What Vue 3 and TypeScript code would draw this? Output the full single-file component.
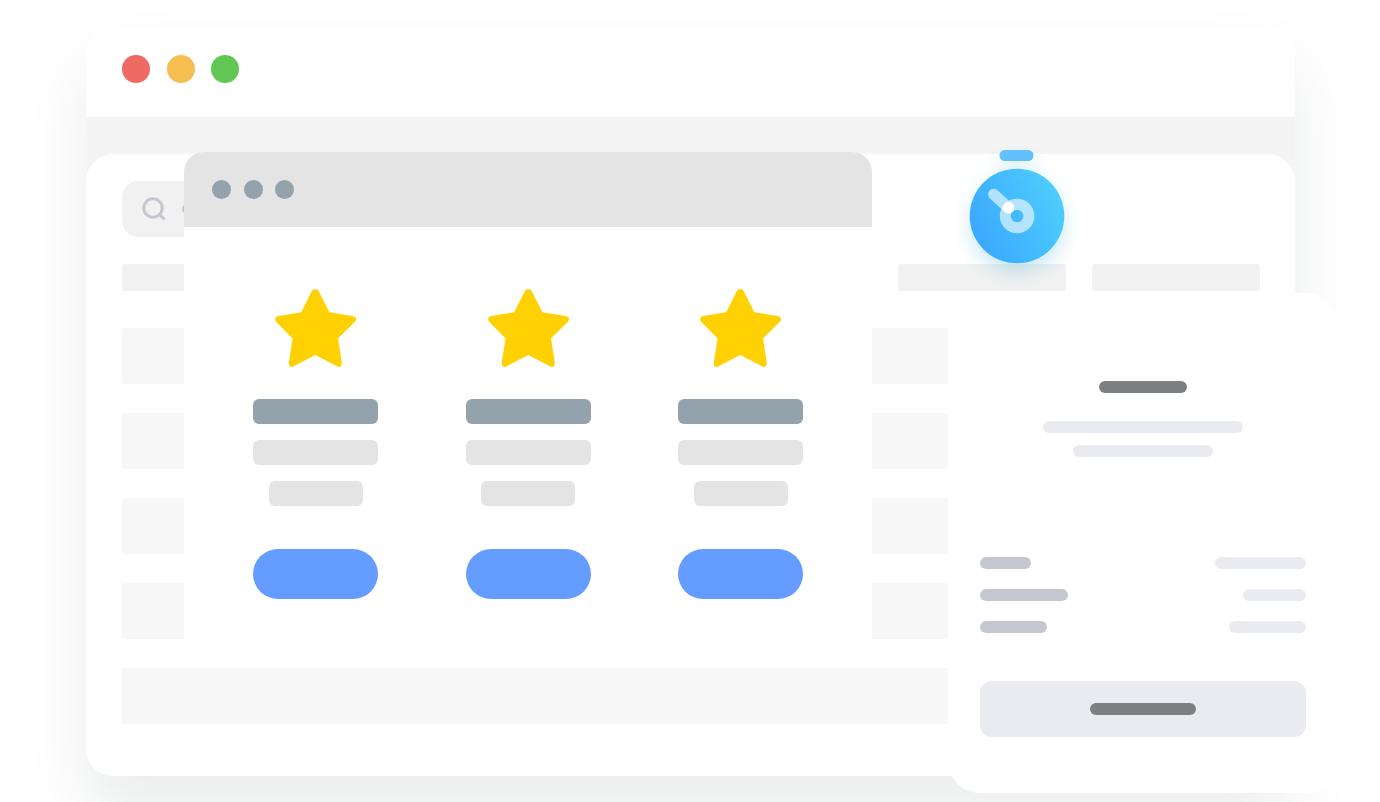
<script setup lang="ts">
interface DetailRow {
  label: number
  value: number
}

const lights: { name: string; tone: string }[] = [
  { name: 'Close', tone: 'red' },
  { name: 'Minimize', tone: 'amber' },
  { name: 'Zoom', tone: 'green' },
]
const plans: string[] = ['first', 'second', 'third']
const details: DetailRow[] = [
  { label: 51, value: 91 },
  { label: 88, value: 63 },
  { label: 67, value: 77 },
]
</script>

<template>
  <main class="stage">
    <section class="browser">
      <header class="titlebar">
        <div class="lights">
          <button
            v-for="light in lights"
            :key="light.tone"
            type="button"
            class="light"
            :class="light.tone"
            :aria-label="light.name"
          ></button>
        </div>
      </header>
      <div class="backdrop">
        <div class="page">
          <label class="search">
            <svg class="search-icon" viewBox="0 0 24 24" aria-hidden="true">
              <circle cx="11" cy="11" r="9.2" />
              <path d="M17.8 17.8 22.6 22.4" />
            </svg>
            <span class="search-hint"></span>
            <input class="search-input" type="search" aria-label="Search" />
          </label>
          <div class="chips">
            <span v-for="n in 6" :key="n" class="chip"></span>
          </div>
          <div class="rows">
            <div v-for="n in 5" :key="n" class="row"></div>
          </div>
        </div>
      </div>
    </section>

    <section class="popup">
      <header class="popup-bar">
        <div class="popup-dots">
          <span v-for="n in 3" :key="n" class="popup-dot"></span>
        </div>
      </header>
      <div class="plans">
        <article v-for="plan in plans" :key="plan" class="plan">
          <svg class="star" viewBox="0 0 81 78" aria-hidden="true">
            <path
              d="M36.7 2.2Q37.8 .3 39.2 .3H41.4Q42.8 .3 43.8 2.2L54.4 23.3 77.6 26.9Q83.2 28.6 80.1 32.6L63 49.5 66.8 73.6Q66.8 79.2 62.4 77.5L40.3 66 18.2 77.5Q13.8 79.2 13.8 73.6L17.6 49.5 .9 32.6Q-1.6 28.6 3 26.9L26.2 23.3Z"
            />
          </svg>
          <div class="block dark"></div>
          <div class="block"></div>
          <div class="block short"></div>
          <button type="button" class="choose" :aria-label="`Choose ${plan} plan`"></button>
        </article>
      </div>
    </section>

    <svg class="timer" viewBox="0 0 96 115" aria-hidden="true">
      <defs>
        <linearGradient id="timer-face" x1="0.05" y1="0.72" x2="0.95" y2="0.28">
          <stop offset="0" stop-color="#3ba8ff" />
          <stop offset="1" stop-color="#4dcdfd" />
        </linearGradient>
      </defs>
      <rect x="30.5" y="1" width="34" height="11" rx="5.5" fill="#62c0fd" />
      <circle cx="48" cy="67" r="47.3" fill="url(#timer-face)" />
      <circle cx="48.1" cy="67" r="11.8" fill="none" stroke="#fff" stroke-opacity="0.6" stroke-width="11" />
      <path d="M24.7 45.3 39.5 58.8" stroke="#fff" stroke-opacity="0.6" stroke-width="11.2" stroke-linecap="round" />
      <circle cx="39.5" cy="58.7" r="5.8" fill="#fff" />
    </svg>

    <aside class="panel">
      <div class="panel-head">
        <span class="line title"></span>
        <span class="line wide"></span>
        <span class="line narrow"></span>
      </div>
      <div class="details">
        <div v-for="(item, i) in details" :key="i" class="detail">
          <span class="line label" :style="{ width: `${item.label}px` }"></span>
          <span class="line" :style="{ width: `${item.value}px` }"></span>
        </div>
      </div>
      <button type="button" class="confirm" aria-label="Confirm">
        <span class="line confirm-line"></span>
      </button>
    </aside>
  </main>
</template>

<style>
body {
  margin: 0;
  background: #fff;
}
</style>

<style scoped>
.stage {
  position: relative;
  box-sizing: border-box;
  padding: 27px 85px 26px 86px;
  overflow: hidden;
  font-family: "Liberation Sans", Arial, sans-serif;
}

button {
  display: block;
  padding: 0;
  border: 0;
  cursor: pointer;
}

.browser {
  border-radius: 27px;
  background: #fff;
  box-shadow: 0 36px 64px rgba(13, 41, 33, 0.085);
}

.titlebar {
  padding: 28px 36px 34px;
}

.lights {
  display: flex;
  justify-content: space-between;
  width: 117px;
}

.light {
  width: 28px;
  height: 28px;
  border-radius: 50%;
}

.red {
  background: #ed6b60;
}

.amber {
  background: #f5bf50;
}

.green {
  background: #62c655;
}

.backdrop {
  padding-top: 37px;
  border-radius: 0 0 27px 27px;
  background: #f4f4f4;
}

.page {
  padding: 27px 35px 52px 36px;
  border-radius: 27px;
  background: #fff;
}

.search {
  display: flex;
  align-items: center;
  gap: 16px;
  box-sizing: border-box;
  width: 362px;
  height: 56px;
  padding: 0 20px;
  border-radius: 16px;
  background: #f1f1f1;
}

.search-icon {
  width: 24px;
  height: 24px;
  fill: none;
  stroke: #c4c7d0;
  stroke-width: 3;
}

.search-hint {
  width: 88px;
  height: 10px;
  border-radius: 5px;
  background: #c4c7d0;
}

.search-input {
  flex: 1;
  min-width: 0;
  border: 0;
  outline: 0;
  background: transparent;
}

.chips {
  display: grid;
  grid-template-columns: repeat(6, 1fr);
  gap: 26px;
  margin-top: 27px;
}

.chip {
  height: 27px;
  border-radius: 3px;
  background: #f1f1f1;
}

.rows {
  display: grid;
  gap: 29px;
  margin-top: 37px;
}

.row {
  height: 56px;
  border-radius: 3px;
  background: #f7f7f7;
}

.popup {
  position: absolute;
  top: 152px;
  left: 184px;
  width: 688px;
  border-radius: 20px;
  background: #fff;
}

.popup-bar {
  display: flex;
  align-items: center;
  height: 75px;
  padding: 0 28px;
  border-radius: 20px 20px 0 0;
  background: #e4e4e4;
}

.popup-dots {
  display: flex;
  justify-content: space-between;
  width: 82px;
}

.popup-dot {
  width: 19px;
  height: 19px;
  border-radius: 50%;
  background: #94a2ab;
}

.plans {
  display: flex;
  justify-content: space-between;
  padding: 62px 69px 53px;
}

.plan {
  display: flex;
  flex-direction: column;
  align-items: center;
  gap: 16px;
  width: 125px;
}

.star {
  width: 81px;
  height: 78px;
  margin-bottom: 16px;
  fill: #ffd103;
}

.block {
  width: 100%;
  height: 25px;
  border-radius: 6px;
  background: #e4e4e4;
}

.dark {
  background: #94a2ab;
}

.short {
  width: 94px;
}

.choose {
  width: 100%;
  height: 50px;
  margin-top: 27px;
  border-radius: 25px;
  background: #649dff;
}

.timer {
  position: absolute;
  top: 149px;
  right: 315px;
  width: 96px;
  height: 115px;
  overflow: visible;
  fill: none;
  filter: drop-shadow(0 9px 9px rgba(30, 165, 205, 0.24));
}

.panel {
  position: absolute;
  top: 293px;
  right: 42px;
  box-sizing: border-box;
  width: 390px;
  padding: 88px 32px 56px;
  border-radius: 32px;
  background: #fff;
}

.panel-head {
  display: flex;
  flex-direction: column;
  align-items: center;
  gap: 12px;
}

.line {
  display: block;
  height: 12px;
  border-radius: 6px;
  background: #eaebf0;
}

.title {
  width: 88px;
  margin-bottom: 16px;
  background: #7e7f83;
}

.wide {
  width: 200px;
}

.narrow {
  width: 140px;
}

.details {
  display: grid;
  gap: 20px;
  margin-top: 100px;
}

.detail {
  display: flex;
  justify-content: space-between;
}

.label {
  background: #c4c7d0;
}

.confirm {
  display: flex;
  align-items: center;
  justify-content: center;
  width: 100%;
  height: 56px;
  margin-top: 48px;
  border-radius: 12px;
  background: #eaebf0;
}

.confirm-line {
  width: 106px;
  background: #7e7f83;
}
</style>
